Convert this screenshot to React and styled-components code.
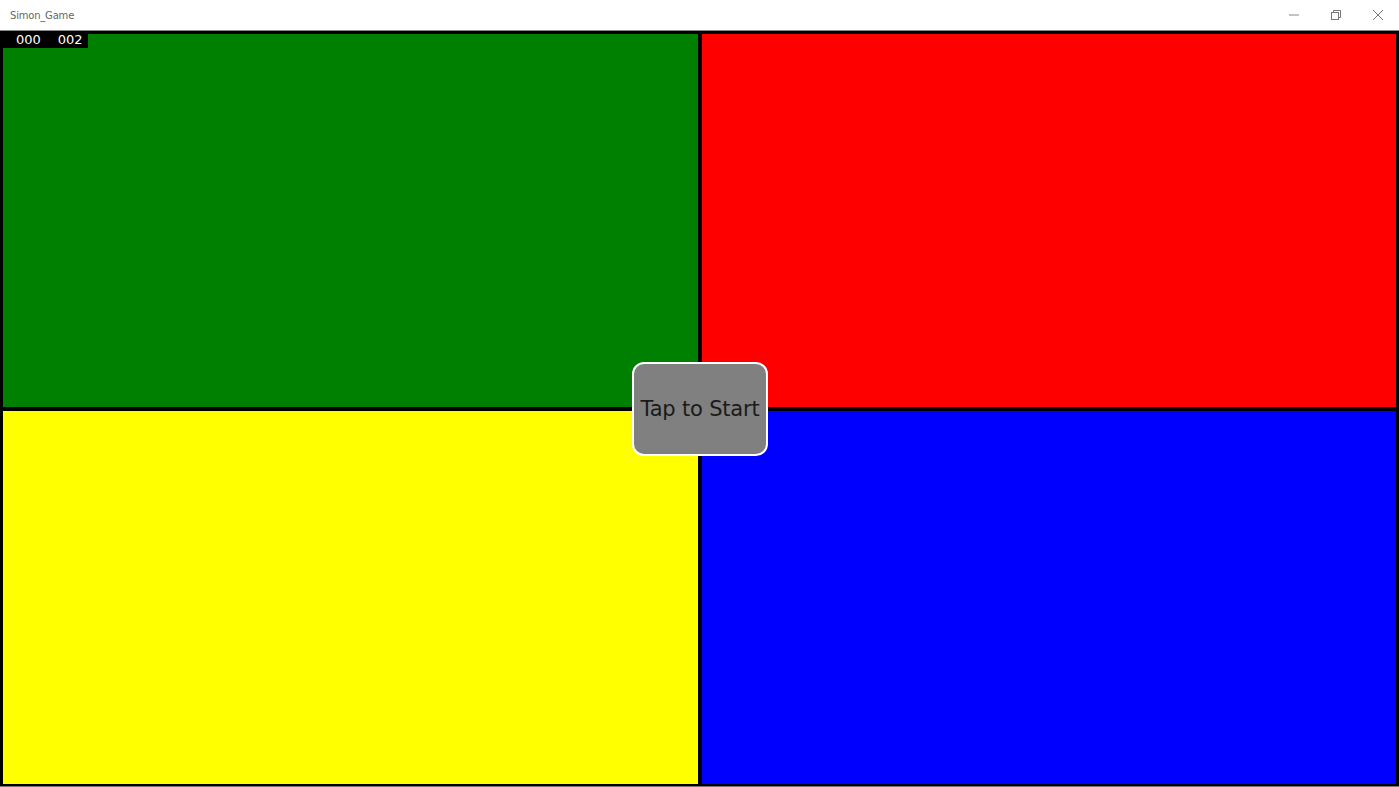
import React from "react";
import styled, { createGlobalStyle } from "styled-components";

const GlobalStyle = createGlobalStyle`
  html, body { margin: 0; padding: 0; background: #ffffff; }
  body { font-family: "DejaVu Sans", "Liberation Sans", sans-serif; }
`;

const Window = styled.div`
  width: 1399px;
  height: 787px;
  display: flex;
  flex-direction: column;
  overflow: hidden;
`;

const TitleBar = styled.div`
  height: 30px;
  flex: none;
  display: flex;
  align-items: center;
  justify-content: space-between;
  background: #ffffff;
  border-bottom: 1px solid #8a8a8a;
`;

const Title = styled.div`
  padding-left: 10px;
  font-size: 10px;
  color: #666;
  letter-spacing: -0.2px;
`;

const Controls = styled.div`
  display: flex;
  height: 100%;
`;

const ControlButton = styled.div`
  width: 42px;
  height: 100%;
  display: flex;
  align-items: center;
  justify-content: center;
  color: #777;
`;

const Board = styled.div`
  position: relative;
  flex: 1;
  background: #000;
  padding: 3px 3px 2px 3px;
  display: grid;
  grid-template-columns: 1fr 1fr;
  grid-template-rows: 1fr 1fr;
  gap: 4px;
  border-bottom: 1px solid #7a7a7a;
`;

const Pad = styled.div`
  background: ${(p) => p.$color};
`;

const Score = styled.div`
  position: absolute;
  top: 0;
  left: 0;
  width: 88px;
  height: 17px;
  background: #000;
  display: flex;
  align-items: center;
  gap: 17px;
  padding-left: 16px;
  box-sizing: border-box;
  color: #fff;
  font-size: 13px;
`;

const StartButton = styled.button`
  position: absolute;
  left: 632px;
  top: 331px;
  width: 136px;
  height: 94px;
  background: #808080;
  border: 2px solid #ffffff;
  border-radius: 12px;
  color: #1a1a1a;
  font-family: "DejaVu Sans", sans-serif;
  font-size: 21px;
  padding: 0;
  letter-spacing: -0.2px;
  white-space: nowrap;
  cursor: pointer;
`;

export default function App() {
  return (
    <Window>
      <GlobalStyle />
      <TitleBar>
        <Title>Simon_Game</Title>
        <Controls>
          <ControlButton>
            <svg width="10" height="10" viewBox="0 0 10 10">
              <line x1="0" y1="5" x2="10" y2="5" stroke="#888" strokeWidth="1" />
            </svg>
          </ControlButton>
          <ControlButton>
            <svg width="10" height="10" viewBox="0 0 10 10" fill="none" stroke="#777" strokeWidth="1">
              <rect x="0.5" y="2.5" width="7" height="7" />
              <polyline points="2.5,2.5 2.5,0.5 9.5,0.5 9.5,7.5 7.5,7.5" />
            </svg>
          </ControlButton>
          <ControlButton>
            <svg width="10" height="10" viewBox="0 0 10 10" stroke="#777" strokeWidth="1">
              <line x1="0" y1="0" x2="10" y2="10" />
              <line x1="10" y1="0" x2="0" y2="10" />
            </svg>
          </ControlButton>
        </Controls>
      </TitleBar>
      <Board>
        <Pad $color="#008000" />
        <Pad $color="#ff0000" />
        <Pad $color="#ffff00" />
        <Pad $color="#0000ff" />
        <Score>
          <span>000</span>
          <span>002</span>
        </Score>
        <StartButton>Tap to Start</StartButton>
      </Board>
    </Window>
  );
}
